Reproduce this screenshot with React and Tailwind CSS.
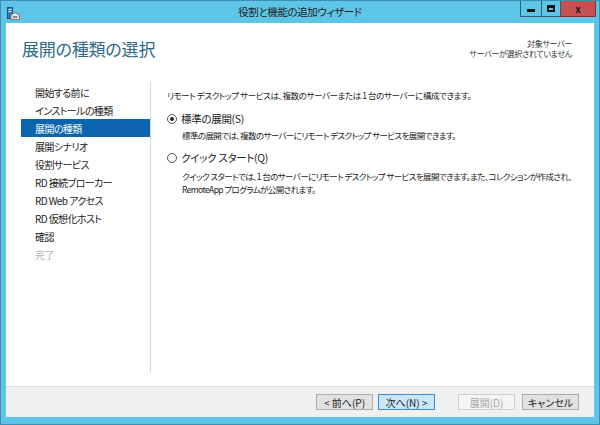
const navItems = [
  { label: '開始する前に' },
  { label: 'インストールの種類' },
  { label: '展開の種類', active: true },
  { label: '展開シナリオ' },
  { label: '役割サービス' },
  { label: 'RD 接続ブローカー' },
  { label: 'RD Web アクセス' },
  { label: 'RD 仮想化ホスト' },
  { label: '確認' },
  { label: '完了', disabled: true },
];

function Radio({ checked }) {
  return (
    <span className="w-[10px] h-[10px] rounded-full border border-[#555] bg-white flex items-center justify-center shrink-0">
      {checked && <span className="w-[4px] h-[4px] rounded-full bg-[#222]" />}
    </span>
  );
}

function Button({ children, variant = 'normal' }) {
  const styles = {
    normal: 'bg-[#e1e1e1] border-[#adadad] text-[#222]',
    primary: 'bg-[#c9e7fb] border-[#3c8fcf] text-[#222]',
    disabled: 'bg-[#f4f4f4] border-[#cfcfcf] text-[#a8a8a8]',
  };
  return (
    <div className={`w-[57px] h-[16px] border flex items-center justify-center text-[10px] ${styles[variant]}`}>
      {children}
    </div>
  );
}

export default function App() {
  return (
    <div
      className="w-[600px] h-[425px] bg-[#5fc5e7] border border-[#3d8fb5] flex flex-col overflow-hidden"
      style={{ fontFamily: '"Noto Sans CJK JP", "Noto Sans", sans-serif', fontFeatureSettings: '"palt"' }}
    >
      {/* title bar */}
      <div className="h-[22px] relative flex items-center shrink-0">
        <svg width="13" height="13" viewBox="0 0 13 13" className="ml-[6px] mt-[2px]">
          <rect x="0.5" y="0.5" width="5" height="11" fill="#3a78b8" stroke="#1f4f80" />
          <rect x="1.5" y="2" width="3" height="1" fill="#dfefff" />
          <rect x="1.5" y="4" width="3" height="1" fill="#dfefff" />
          <path d="M4 8 L8 5.5 L12.5 8 V12.5 H4 Z" fill="#e8e8e8" stroke="#777" />
          <rect x="6" y="9" width="4.5" height="2" fill="#888" />
        </svg>
        <div className="absolute inset-x-0 top-0 h-full flex items-center justify-center text-[10.5px] text-[#1b1b1b] tracking-[-0.4px]">
          役割と機能の追加ウィザード
        </div>
        <div className="absolute right-[3px] top-[-1px] flex">
          <div className="w-[22px] h-[17px] border border-[#2a5f7a] flex items-end justify-center pb-[4px]">
            <span className="w-[8px] h-[3px] bg-[#111]" />
          </div>
          <div className="w-[19px] h-[17px] border border-l-0 border-[#2a5f7a] flex items-center justify-center">
            <span className="w-[8px] h-[7px] border-2 border-t-[3px] border-[#111]" />
          </div>
          <div className="w-[35px] h-[17px] bg-[#c75050] border border-l-0 border-[#7a2f2f] flex items-center justify-center text-[10px] font-bold text-[#1a1a1a]">
            x
          </div>
        </div>
      </div>

      {/* window body */}
      <div className="mx-[5px] flex-1 flex flex-col bg-white">
        {/* header */}
        <div className="h-[59px] flex justify-between shrink-0">
          <div className="pl-[16px] pt-[15px] text-[17px] leading-[22px] text-[#2f6a88] tracking-[-0.2px]">
            展開の種類の選択
          </div>
          <div className="pr-[22px] pt-[16px] text-[8px] leading-[10px] text-[#333] text-right tracking-[-0.3px]">
            <div>対象サーバー</div>
            <div>サーバーが選択されていません</div>
          </div>
        </div>

        {/* content */}
        <div className="flex-1 flex pb-[14px]">
          <div className="w-[145px] border-r border-[#d6d6d6] pl-[15px] pt-[1px] shrink-0">
            {navItems.map((item) => (
              <div
                key={item.label}
                className={`h-[18px] pl-[14px] flex items-center text-[10px] tracking-[-0.6px] ${
                  item.active
                    ? 'bg-[#0a64ae] text-white'
                    : item.disabled
                    ? 'text-[#b4b4b4]'
                    : 'text-[#222]'
                }`}
              >
                {item.label}
              </div>
            ))}
          </div>

          <div className="flex-1 pl-[16px] pt-[7px] text-[8.5px] tracking-[-0.4px] text-[#222]">
            <div className="leading-[12px]">
              リモート デスクトップ サービスは、複数のサーバーまたは 1 台のサーバーに構成できます。
            </div>

            <div className="mt-[12px] flex items-center gap-[4px] text-[10.5px] tracking-[-0.3px] leading-[12px]">
              <Radio checked />
              <span>標準の展開(S)</span>
            </div>
            <div className="mt-[4px] pl-[15px] leading-[12px] tracking-[-0.6px]">
              標準の展開では、複数のサーバーにリモート デスクトップ サービスを展開できます。
            </div>

            <div className="mt-[11px] flex items-center gap-[4px] text-[10.5px] tracking-[-0.3px] leading-[12px]">
              <Radio />
              <span>クイック スタート(Q)</span>
            </div>
            <div className="mt-[6px] pl-[15px] leading-[13px] tracking-[-0.6px]">
              クイック スタートでは、1 台のサーバーにリモート デスクトップ サービスを展開できます。また、コレクションが作成され、
              <br />
              RemoteApp プログラムが公開されます。
            </div>
          </div>
        </div>

        {/* footer */}
        <div className="h-[31px] bg-[#f0f0f0] border-t border-[#dfdfdf] flex items-center justify-end pr-[15px] shrink-0">
          <div className="flex items-center gap-[5px]">
            <Button>&lt; 前へ(P)</Button>
            <Button variant="primary">次へ(N) &gt;</Button>
          </div>
          <div className="flex items-center gap-[7px] ml-[23px]">
            <Button variant="disabled">展開(D)</Button>
            <Button>キャンセル</Button>
          </div>
        </div>
      </div>
      <div className="h-[7px] shrink-0" />
    </div>
  );
}
